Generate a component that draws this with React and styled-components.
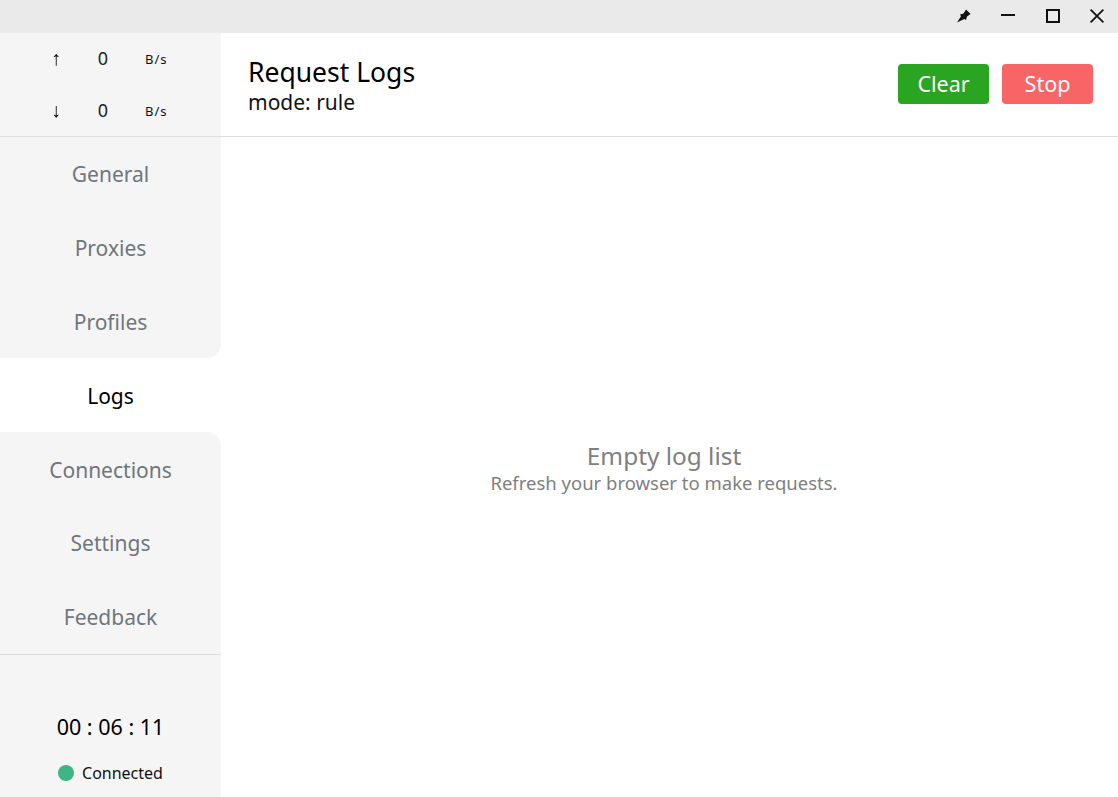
import React from "react";
import styled, { createGlobalStyle } from "styled-components";

const menus = ["General", "Proxies", "Profiles", "Logs", "Connections", "Settings", "Feedback"];
const ativo = 3;

const Global = createGlobalStyle`
  html, body {
    margin: 0;
    padding: 0;
    height: 100%;
    background: #fff;
    font-family: "Noto Sans", "Open Sans", sans-serif;
    overflow: hidden;
  }
  * { box-sizing: border-box; }
`;

function App() {
  return (
    <Janela>
      <Global />
      <BarraTitulo>
        <BotaoJanela>
          <svg width="16" height="16" viewBox="0 0 16 16">
            <path d="M1 14.5 5 8.2 4 6.6 7.6 5.6 10 1.4 14.6 6 11 8.4 10 12 8.4 11Z" fill="#111" />
          </svg>
        </BotaoJanela>
        <BotaoJanela>
          <svg width="16" height="16" viewBox="0 0 16 16">
            <path d="M1 7h14" stroke="#111" strokeWidth="2" />
          </svg>
        </BotaoJanela>
        <BotaoJanela>
          <svg width="16" height="16" viewBox="0 0 16 16">
            <rect x="3" y="2" width="12" height="12" fill="none" stroke="#111" strokeWidth="2" />
          </svg>
        </BotaoJanela>
        <BotaoJanela>
          <svg width="16" height="16" viewBox="0 0 16 16">
            <path d="M2.6 1.6l12.8 12.8M15.4 1.6 2.6 14.4" stroke="#111" strokeWidth="1.8" />
          </svg>
        </BotaoJanela>
      </BarraTitulo>
      <Corpo>
        <Lateral>
          <Trafego>
            <LinhaTrafego>
              <Seta>↑</Seta>
              <Numero>0</Numero>
              <Unidade>B/s</Unidade>
            </LinhaTrafego>
            <LinhaTrafego>
              <Seta>↓</Seta>
              <Numero>0</Numero>
              <Unidade>B/s</Unidade>
            </LinhaTrafego>
          </Trafego>
          <Menu>
            {menus.map((nome, index) => (
              <ItemMenu
                key={nome}
                $ativo={index === ativo}
                $antes={index === ativo - 1}
                $depois={index === ativo + 1}
              >
                {nome}
              </ItemMenu>
            ))}
          </Menu>
          <Rodape>
            <Tempo>00 : 06 : 11</Tempo>
            <Status>
              <Bolinha />
              Connected
            </Status>
          </Rodape>
        </Lateral>
        <Conteudo>
          <Cabecalho>
            <div>
              <Titulo>Request Logs</Titulo>
              <Modo>mode: rule</Modo>
            </div>
            <Botoes>
              <Botao $cor="#2aa522">Clear</Botao>
              <Botao $cor="#f96567">Stop</Botao>
            </Botoes>
          </Cabecalho>
          <Vazio>
            <VazioTitulo>Empty log list</VazioTitulo>
            <VazioTexto>Refresh your browser to make requests.</VazioTexto>
          </Vazio>
        </Conteudo>
      </Corpo>
    </Janela>
  );
}

const Janela = styled.div`
  width: 100vw;
  height: 100vh;
  display: flex;
  flex-direction: column;
`;

const BarraTitulo = styled.div`
  height: 33px;
  flex: none;
  background: #eaeaea;
  display: flex;
  justify-content: flex-end;
  align-items: flex-start;
`;

const BotaoJanela = styled.div`
  width: 44px;
  height: 32px;
  display: flex;
  align-items: center;
  justify-content: center;
`;

const Corpo = styled.div`
  flex: 1;
  display: flex;
  min-height: 0;
`;

const Lateral = styled.aside`
  width: 221px;
  flex: none;
  display: flex;
  flex-direction: column;
`;

const Trafego = styled.div`
  height: 104px;
  flex: none;
  background: #f5f5f5;
  border-bottom: 1px solid #dedede;
  display: flex;
  flex-direction: column;
  gap: 5px;
`;

const LinhaTrafego = styled.div`
  height: 47px;
  display: grid;
  grid-template-columns: 46px 46px auto;
  align-items: center;
  padding-left: 33px;
  color: #111;
`;

const Seta = styled.span`
  font-family: "Liberation Sans", sans-serif;
  font-size: 20px;
  line-height: 47px;
  text-align: center;
  color: #000;
  will-change: transform;
`;

const Numero = styled.span`
  font-size: 18px;
  line-height: 47px;
  text-align: center;
  padding-left: 2px;
  color: #222;
`;

const Unidade = styled.span`
  font-size: 13px;
  letter-spacing: 1px;
  line-height: 47px;
  margin-top: 3px;
  padding-left: 20px;
`;

const Menu = styled.nav`
  display: flex;
  flex-direction: column;
  flex: none;
`;

const ItemMenu = styled.div`
  height: 73.8px;
  padding-top: 1px;
  display: flex;
  align-items: center;
  justify-content: center;
  font-size: 21px;
  color: ${(props) => (props.$ativo ? "#000" : "#6f767c")};
  background: ${(props) => (props.$ativo ? "#fff" : "#f5f5f5")};
  border-bottom-right-radius: ${(props) => (props.$antes ? "14px" : "0")};
  border-top-right-radius: ${(props) => (props.$depois ? "14px" : "0")};
`;

const Rodape = styled.div`
  flex: 1;
  background: #f5f5f5;
  border-top: 1px solid #dedede;
  display: flex;
  flex-direction: column;
  align-items: center;
  padding-top: 57px;
`;

const Tempo = styled.div`
  font-size: 21.5px;
  line-height: 30px;
  color: #000;
`;

const Status = styled.div`
  display: flex;
  align-items: center;
  gap: 8px;
  margin-top: 20px;
  font-size: 16px;
  line-height: 22px;
  color: #111;
`;

const Bolinha = styled.span`
  width: 16px;
  height: 16px;
  border-radius: 50%;
  background: #3fb585;
`;

const Conteudo = styled.main`
  flex: 1;
  display: flex;
  flex-direction: column;
  min-width: 0;
`;

const Cabecalho = styled.header`
  height: 104px;
  flex: none;
  border-bottom: 1px solid #dedede;
  display: flex;
  align-items: center;
  justify-content: space-between;
  padding: 0 25px 2px 27px;
`;

const Titulo = styled.div`
  font-size: 26.5px;
  line-height: 36px;
  color: #000;
`;

const Modo = styled.div`
  font-size: 21px;
  line-height: 24px;
  color: #111;
`;

const Botoes = styled.div`
  display: flex;
  gap: 13px;
`;

const Botao = styled.button`
  width: 91px;
  height: 40px;
  border: none;
  border-radius: 4px;
  padding: 0;
  font-family: inherit;
  font-size: 21.5px;
  color: #fff;
  background: ${(props) => props.$cor};
`;

const Vazio = styled.div`
  flex: 1;
  display: flex;
  flex-direction: column;
  align-items: center;
  padding: 302px 11px 0 0;
`;

const VazioTitulo = styled.div`
  font-size: 24.4px;
  line-height: 34px;
  color: #7f7f7f;
`;

const VazioTexto = styled.div`
  font-size: 18.5px;
  line-height: 20px;
  color: #7f7f7f;
`;

export default App;
